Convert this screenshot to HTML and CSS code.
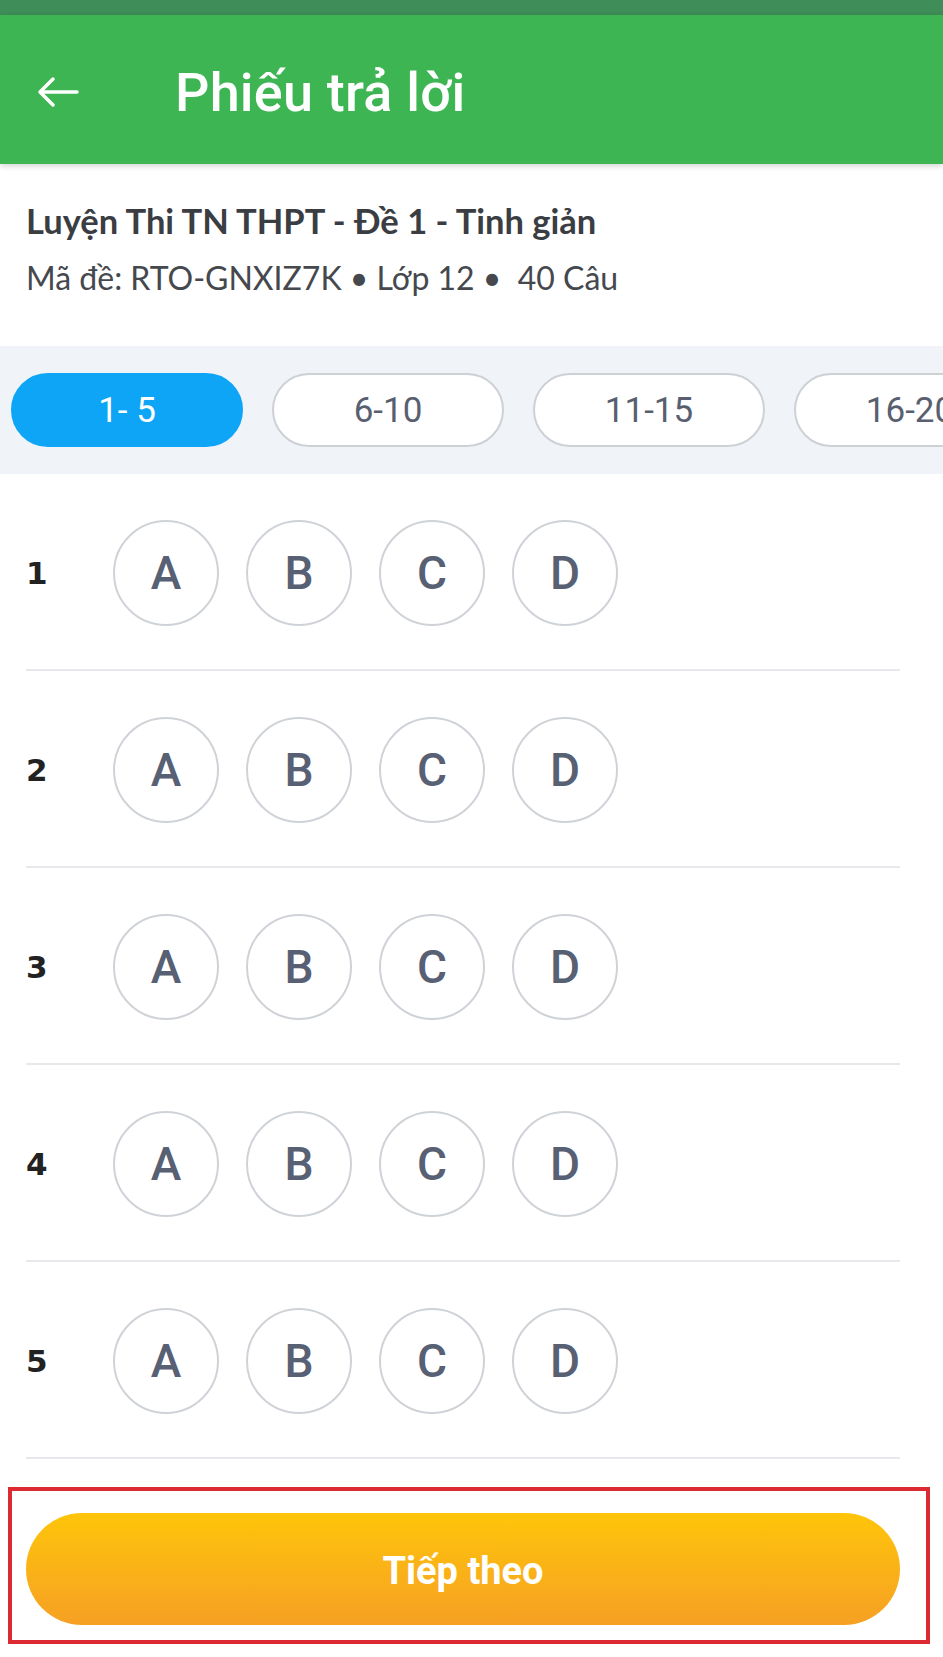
FILE: index.html
```html
<!DOCTYPE html>
<html lang="vi">
<head>
	<meta charset="UTF-8">
	<title>Phiếu trả lời</title>
	<link rel="stylesheet" href="styles.css">
</head>
<body>
	<div class="statusbar"></div>
	<header class="appbar">
		<svg class="back" width="44" height="32" viewBox="0 0 44 32">
			<path d="M42 16H5M18 3L5 16l13 13" fill="none" stroke="#fff" stroke-width="3.5" stroke-linecap="round" stroke-linejoin="round"/>
		</svg>
		<h1>Phiếu trả lời</h1>
	</header>
	<section class="exam-info">
		<h2>Luyện Thi TN THPT - Đề 1 - Tinh giản</h2>
		<p>Mã đề: RTO-GNXIZ7K • Lớp 12 •&nbsp; 40 Câu</p>
	</section>
	<nav class="ranges">
		<span class="range active">1- 5</span>
		<span class="range">6-10</span>
		<span class="range">11-15</span>
		<span class="range">16-20</span>
	</nav>
	<ul class="sheet">
		<li class="question">
			<span class="num">1</span>
			<span class="choice">A</span><span class="choice">B</span><span class="choice">C</span><span class="choice">D</span>
		</li>
		<li class="question">
			<span class="num">2</span>
			<span class="choice">A</span><span class="choice">B</span><span class="choice">C</span><span class="choice">D</span>
		</li>
		<li class="question">
			<span class="num">3</span>
			<span class="choice">A</span><span class="choice">B</span><span class="choice">C</span><span class="choice">D</span>
		</li>
		<li class="question">
			<span class="num">4</span>
			<span class="choice">A</span><span class="choice">B</span><span class="choice">C</span><span class="choice">D</span>
		</li>
		<li class="question">
			<span class="num">5</span>
			<span class="choice">A</span><span class="choice">B</span><span class="choice">C</span><span class="choice">D</span>
		</li>
	</ul>
	<div class="footer">
		<button class="next">Tiếp theo</button>
	</div>
</body>
</html>
```

FILE: styles.css
```css
*{
	margin: 0;
	padding: 0;
	box-sizing: border-box;
}
body{
	width: 943px;
	height: 1657px;
	overflow: hidden;
	background: #fff;
	font-family: Roboto, "Noto Sans", sans-serif;
}
.statusbar{
	height: 15px;
	background: #3f8d58;
}
.appbar{
	height: 149px;
	background: #3db553;
	display: flex;
	align-items: center;
	padding: 5px 0 0 35px;
	box-shadow: 0 2px 6px rgba(0,0,0,0.18);
	position: relative;
}
.appbar h1{
	margin-left: 96px;
	color: #fff;
	font-size: 54px;
	font-weight: 500;
	letter-spacing: 0.2px;
}
.exam-info{
	height: 182px;
	padding: 36px 26px 0;
	font-family: Lato, "Noto Sans", sans-serif;
}
.exam-info h2{
	font-size: 34.5px;
	font-weight: 700;
	color: #3a3d42;
	line-height: 42px;
}
.exam-info p{
	margin-top: 16px;
	font-size: 32px;
	color: #45484d;
	line-height: 40px;
}
.ranges{
	height: 128px;
	background: #f0f3f7;
	display: flex;
	align-items: center;
	gap: 29px;
	padding-left: 11px;
	overflow: hidden;
}
.range{
	flex: 0 0 232px;
	height: 74px;
	border-radius: 37px;
	border: 2px solid #cdd1d6;
	background: #fff;
	display: flex;
	align-items: center;
	justify-content: center;
	font-size: 35px;
	color: #586070;
}
.range.active{
	background: #0ea5f7;
	border-color: #0ea5f7;
	color: #fff;
}
.sheet{
	list-style: none;
}
.question{
	margin: 0 43px 0 26px;
	padding: 46px 0 43px;
	border-bottom: 2px solid #e6e8eb;
	display: flex;
	align-items: center;
	gap: 27px;
}
.num{
	width: 60px;
	font-family: "DejaVu Sans", sans-serif;
	font-weight: 700;
	font-size: 31px;
	color: #222;
}
.choice{
	width: 106px;
	height: 106px;
	border-radius: 50%;
	border: 2px solid #cfd3d8;
	display: flex;
	align-items: center;
	justify-content: center;
	font-size: 46px;
	font-weight: 500;
	color: #586074;
}
.footer{
	margin: 28px 13px 0 8px;
	border: 4px solid #dc2a33;
	padding: 22px 26px 15px 14px;
}
.next{
	display: block;
	width: 100%;
	height: 112px;
	border: none;
	border-radius: 56px;
	background: linear-gradient(180deg, #fec50a 0%, #f6a024 100%);
	color: #fff;
	font-family: Roboto, sans-serif;
	font-weight: 700;
	font-size: 38px;
	padding-top: 4px;
}
```
